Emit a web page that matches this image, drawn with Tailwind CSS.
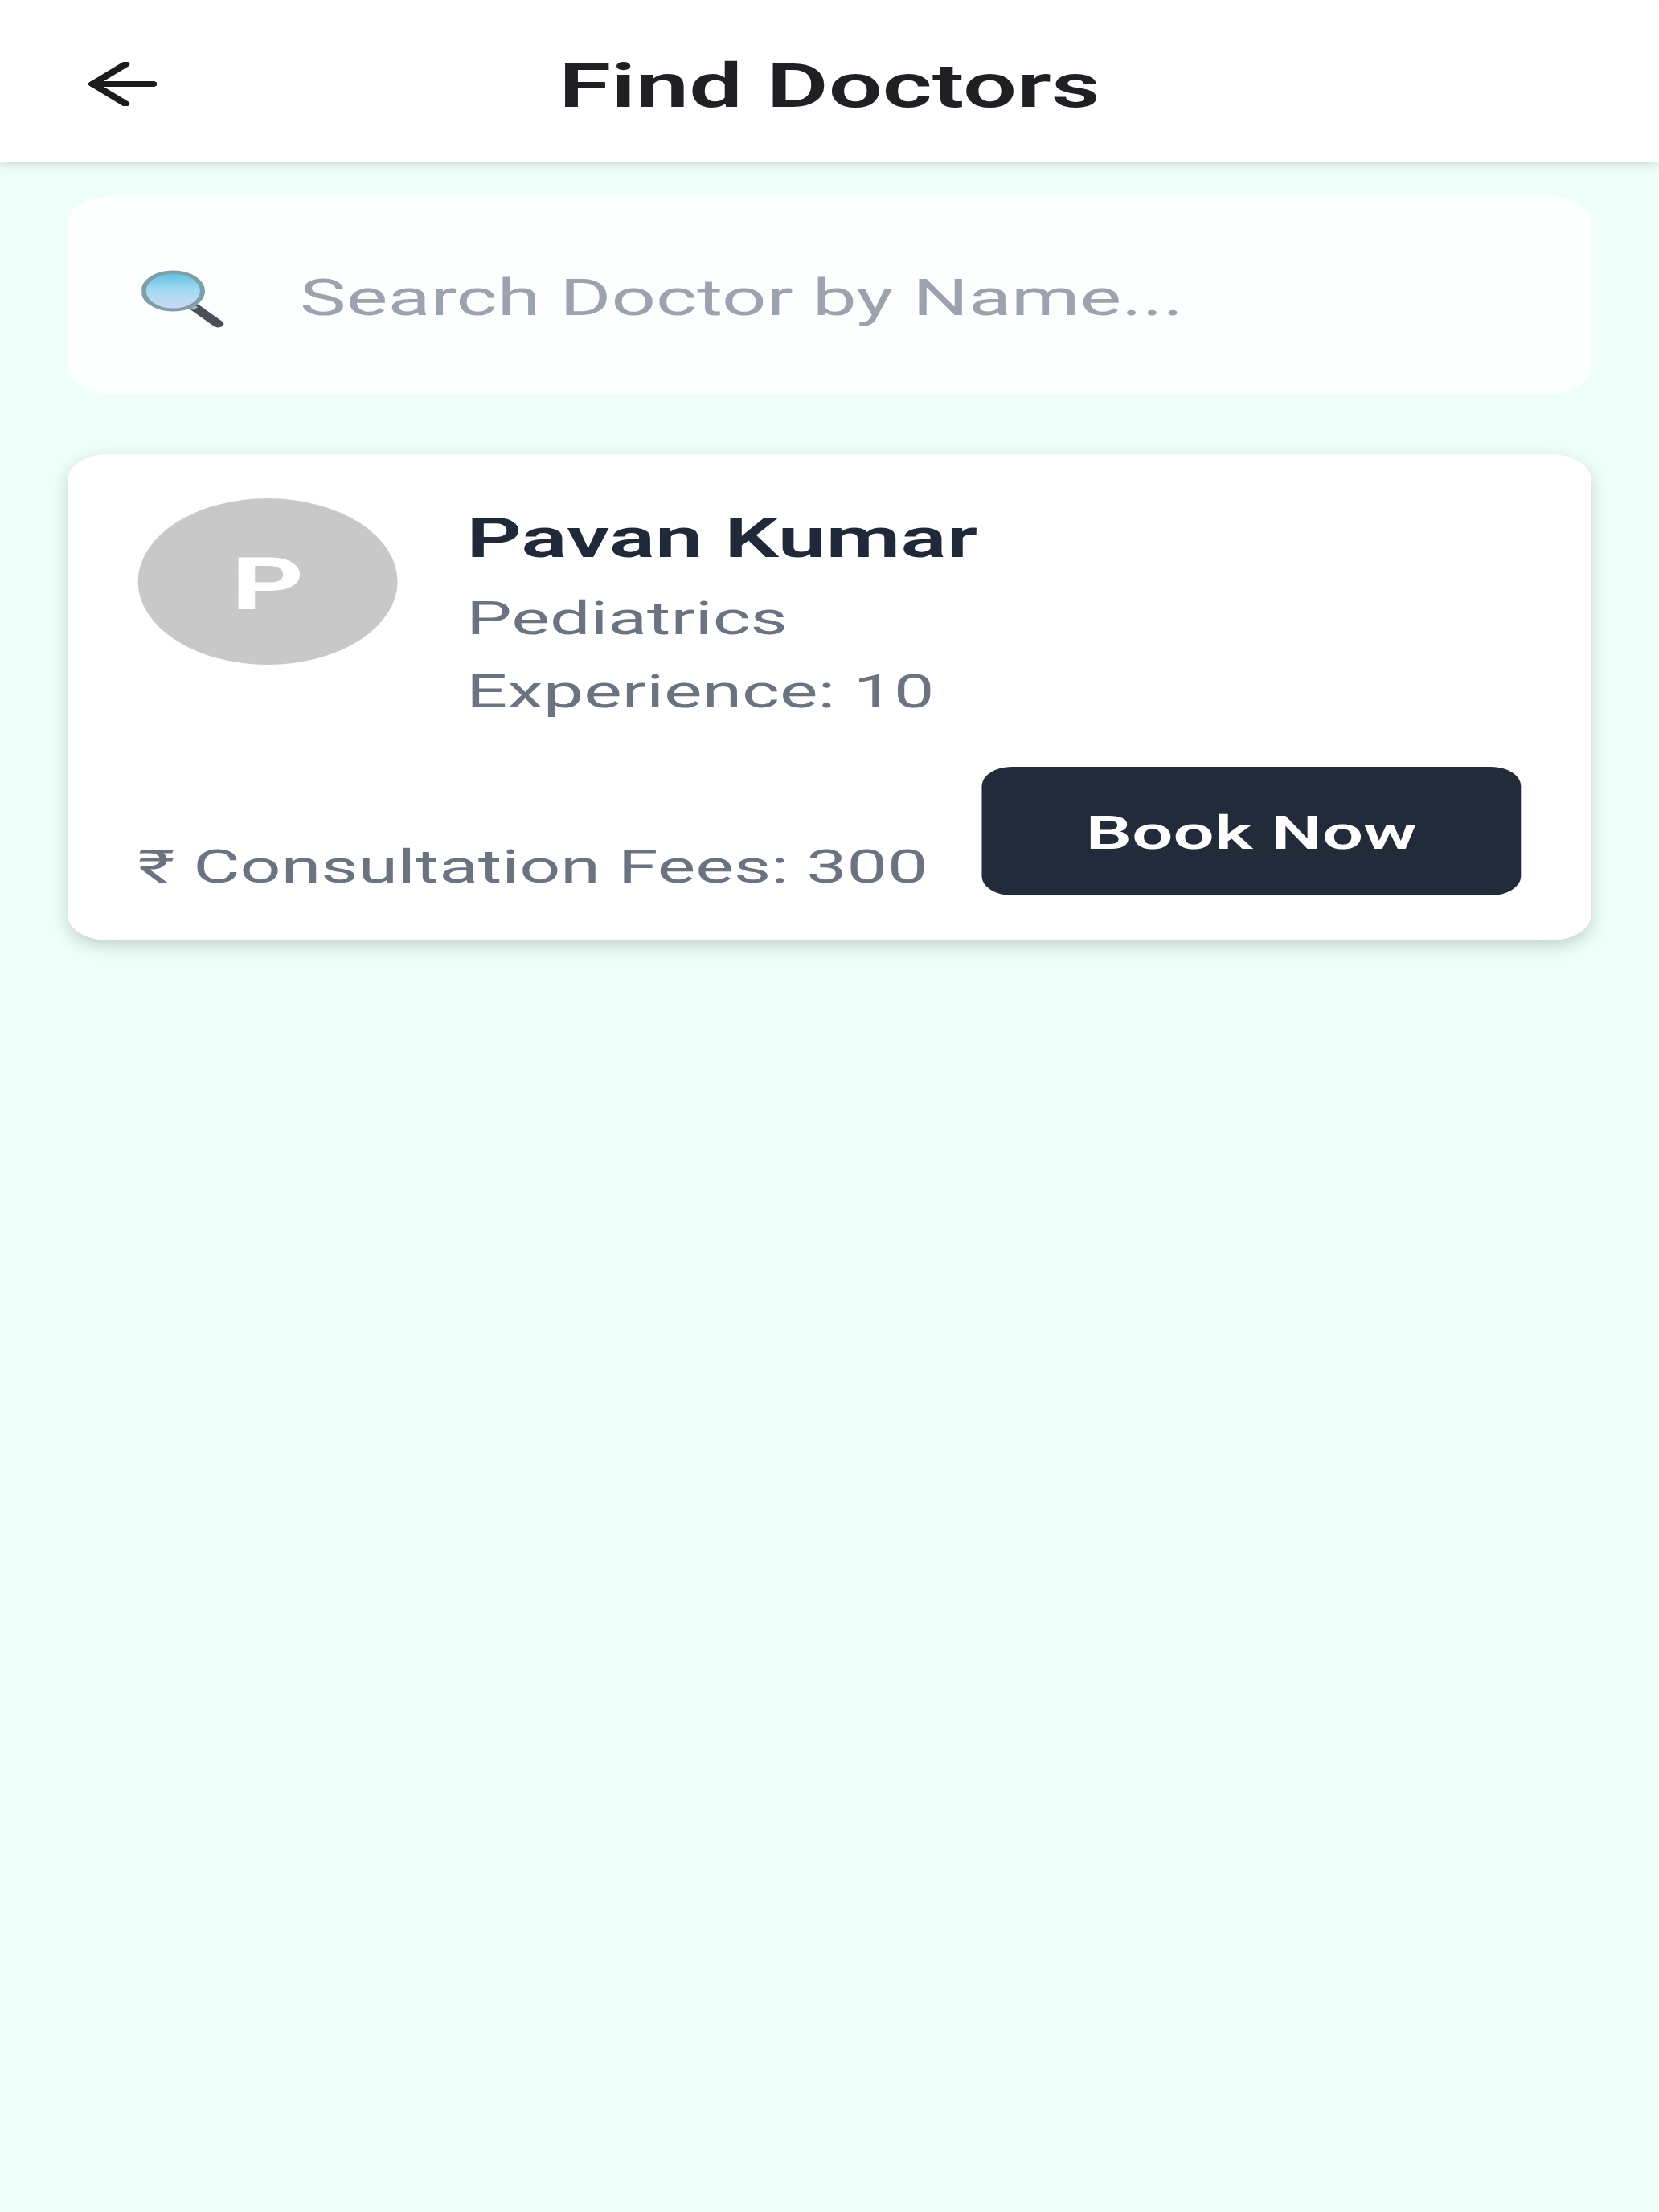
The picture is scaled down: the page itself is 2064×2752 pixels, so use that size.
<!DOCTYPE html>
<html lang="en">
<head>
  <meta charset="UTF-8">
  <meta name="viewport" content="width=device-width, initial-scale=1.0">
  <title>Find Doctors</title>
  <script src="https://cdn.jsdelivr.net/npm/@tailwindcss/browser@4"></script>
</head>

<body class="w-[2064px] h-[2752px] overflow-hidden bg-[#eefffa]">
  <!-- the screenshot is stretched sideways, so the whole page gets one x scale -->
  <div class="w-[1323px] h-[2752px] origin-top-left scale-x-[1.56] font-[Roboto,sans-serif]">

    <!-- header -->
    <header class="h-[202px] bg-white shadow-[0_3px_10px_rgba(0,0,0,0.14)] grid grid-cols-[1fr_auto_1fr] items-center px-[70px]">
      <button class="w-[55px] h-[55px] mt-[6px]" aria-label="Back">
        <svg viewBox="0 0 55 55" class="w-[55px] h-[55px]" fill="none" stroke="#1c1c1c" stroke-width="7" stroke-linecap="round" stroke-linejoin="round">
          <path d="M52 27.5H4"/>
          <path d="M30 3L4 27.5L30 52"/>
        </svg>
      </button>
      <h1 class="text-[76px] leading-none font-semibold text-[#1f2023] mt-[11px]">Find Doctors</h1>
      <div></div>
    </header>

    <main class="px-[54px] pt-[42px]">
      <!-- search -->
      <div class="h-[246px] bg-[#fdfefe] rounded-[34px] flex items-center pl-[59px] pr-[56px]">
        <svg viewBox="0 0 67 72" class="w-[67px] h-[72px] shrink-0 mt-[10px]">
          <defs>
            <linearGradient id="lens" x1="0" y1="0" x2="0" y2="1">
              <stop offset="0" stop-color="#5cbfe0"/>
              <stop offset="0.5" stop-color="#a5dcf3"/>
              <stop offset="1" stop-color="#cfd6f5"/>
            </linearGradient>
          </defs>
          <path d="M42 46L61 67" stroke="#4a4f5a" stroke-width="9" stroke-linecap="round"/>
          <path d="M36 40L43 48" stroke="#a9b4b8" stroke-width="5"/>
          <circle cx="25" cy="26" r="23.5" fill="url(#lens)" stroke="#7f9ea8" stroke-width="4"/>
        </svg>
        <input
          type="text"
          placeholder="Search Doctor by Name..."
          class="ml-[59px] mt-[8px] flex-1 bg-transparent text-[62.5px] outline-none placeholder:text-[#9ca3af]"
        >
      </div>

      <!-- doctor card -->
      <div class="mt-[75px] bg-white rounded-[32px] shadow-[0_7px_16px_rgba(0,0,0,0.18)] px-[56px] pt-[55px] pb-[56px]">
        <div class="flex gap-[55px]">
          <div class="w-[207px] h-[207px] shrink-0 rounded-full bg-[#c8c8c8] flex items-center justify-center">
            <span class="text-[90px] leading-none font-bold text-white mt-[8px]">P</span>
          </div>
          <div>
            <h2 class="text-[68.5px] leading-[100px] font-semibold text-[#1f2937]">Pavan Kumar</h2>
            <p class="mt-[4px] text-[57.5px] leading-[91px] text-[#6b7280]">Pediatrics</p>
            <p class="text-[57.5px] leading-[91px] text-[#6b7280]">Experience: 10</p>
          </div>
        </div>
        <div class="mt-[48px] flex items-end justify-between">
          <p class="mb-[7px] text-[57.5px] leading-[56px] text-[#6b7280]">₹ Consultation Fees: 300</p>
          <button class="w-[430px] h-[160px] pt-[4px] rounded-[24px] bg-[#222b3a] text-white text-[58px] font-semibold">Book Now</button>
        </div>
      </div>
    </main>
  </div>
</body>
</html>
